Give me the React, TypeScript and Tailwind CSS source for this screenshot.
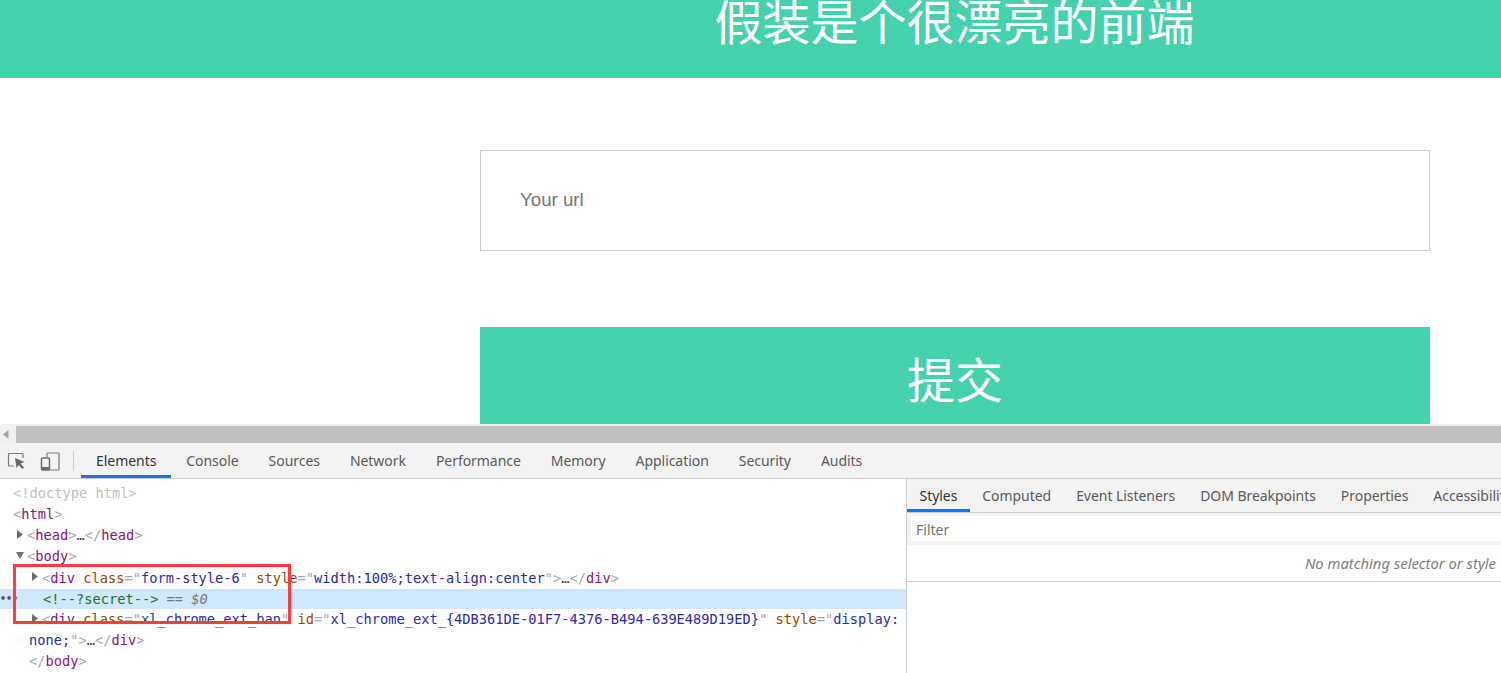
import React from "react";

const uiFont = "font-['Noto_Sans',sans-serif]";

const mainTabs = ["Elements", "Console", "Sources", "Network", "Performance", "Memory", "Application", "Security", "Audits"];
const sideTabs = ["Styles", "Computed", "Event Listeners", "DOM Breakpoints", "Properties", "Accessibility"];

const Arrow: React.FC<{ open?: boolean }> = ({ open }) => (
  <svg width="8" height="10" viewBox="0 0 8 10" className="shrink-0 mr-[3px] mb-[2px]">
    {open ? <path d="M0 1h8L4 8z" fill="#6e6e6e" /> : <path d="M1 0l6 4.5L1 9z" fill="#6e6e6e" />}
  </svg>
);

const Tag: React.FC<{ children: React.ReactNode }> = ({ children }) => <span className="text-[#881280]">{children}</span>;
const B: React.FC<{ children: React.ReactNode }> = ({ children }) => <span className="text-[#a8a8a8]">{children}</span>;
const Name: React.FC<{ children: React.ReactNode }> = ({ children }) => <span className="text-[#994500]">{children}</span>;
const Val: React.FC<{ children: React.ReactNode }> = ({ children }) => <span className="text-[#2a2aae]">{children}</span>;

const Row: React.FC<{ className?: string; arrow?: boolean; open?: boolean; children: React.ReactNode }> = ({ className, arrow, open, children }) => (
  <div className={`flex items-center whitespace-pre ${className ?? ""}`}>
    {arrow && <Arrow open={open} />}
    <span>{children}</span>
  </div>
);

const App: React.FC = () => {
  return (
    <div className="w-[1501px] h-[673px] overflow-hidden bg-white flex flex-col">
      {/* page */}
      <div className="h-[424px] shrink-0 overflow-hidden font-['Liberation_Sans','Noto_Sans_CJK_SC',sans-serif]">
        <div className="h-[78px] bg-[#45d1ae] flex items-end justify-center pl-[408px] pb-[24px] overflow-hidden">
          <h1 className="text-[48px] leading-[60px] font-normal text-white whitespace-nowrap">假装是个很漂亮的前端</h1>
        </div>
        <div className="ml-[480px] w-[950px] pt-[72px]">
          <input
            placeholder="Your url"
            className="block w-full h-[101px] border border-[#cccccc] px-[39px] pb-[2px] text-[18.700px] outline-none placeholder:text-[#757575]"
          />
          <button className="block mt-[76px] w-full h-[106px] pt-[4px] bg-[#45d1ae] text-white text-[48px] leading-[100px] font-normal">提交</button>
        </div>
      </div>

      {/* horizontal scrollbar */}
      <div className="h-[19px] shrink-0 bg-[#f1f1f1] pt-[2px] flex">
        <div className="w-[16px] h-[17px] flex items-center pl-[3px]">
          <svg width="6" height="9" viewBox="0 0 6 9"><path d="M5.500 0v9L0 4.500z" fill="#a3a3a3" /></svg>
        </div>
        <div className="flex-1 h-[17px] bg-[#c0c0c0]" />
      </div>

      {/* devtools toolbar */}
      <div className={`h-[36px] shrink-0 bg-[#f3f3f3] border-b border-[#cccccc] flex items-stretch ${uiFont}`}>
        <div className="w-[74px] flex items-center shrink-0 relative">
          <svg width="20" height="20" viewBox="0 0 20 20" className="ml-[7px]">
            <path d="M7 15H2.500A1 1 0 0 1 1.500 14V3.500A1 1 0 0 1 2.500 2.500H15A1 1 0 0 1 16 3.500V7" fill="none" stroke="#7a7a7a" strokeWidth="1.200" />
            <path d="M8 7l9.500 4-4 1.500 3.500 4-1.800 1.500-3.300-4-2.400 3z" fill="#666666" />
          </svg>
          <svg width="20" height="20" viewBox="0 0 20 20" className="ml-[13px]">
            <path d="M7 6V2.500A.5.5 0 0 1 7.500 2H18.500A.5.5 0 0 1 19 2.500V18.500A.5.5 0 0 1 18.500 19H9" fill="none" stroke="#7a7a7a" strokeWidth="1.200" />
            <rect x="1.500" y="7" width="8" height="12" rx="1" fill="none" stroke="#6e6e6e" strokeWidth="1.500" />
            <rect x="1.500" y="16" width="8" height="3" fill="#6e6e6e" />
          </svg>
          <div className="absolute right-0 top-[8px] w-px h-[20px] bg-[#cccccc]" />
        </div>
        <div className="flex pl-[7px]">
          {mainTabs.map((t, i) => (
            <div
              key={t}
              className={`px-[15px] flex items-center text-[14px] tracking-[-0.05px] h-[35px] ${i === 0 ? "text-[#333333] border-b-[3px] border-[#1a73e8] pt-[3px]" : "text-[#5a5a5a]"}`}
            >
              {t}
            </div>
          ))}
        </div>
      </div>

      {/* devtools body */}
      <div className="flex-1 flex min-h-0">
        <div className="w-[907px] shrink-0 border-r border-[#cccccc] pt-[4px] relative overflow-hidden font-['DejaVu_Sans_Mono',monospace] text-[13.700px]">
          <Row className="h-[21px] pl-[13px] text-[#c0c0c0]">{"<!doctype html>"}</Row>
          <Row className="h-[21px] pl-[13px]"><B>{"<"}</B><Tag>html</Tag><B>{">"}</B></Row>
          <Row className="h-[21px] pl-[16px]" arrow><B>{"<"}</B><Tag>head</Tag><B>{">"}</B><span className="text-[#444444]">…</span><B>{"</"}</B><Tag>head</Tag><B>{">"}</B></Row>
          <Row className="h-[21px] pl-[16px]" arrow open><B>{"<"}</B><Tag>body</Tag><B>{">"}</B></Row>
          <Row className="h-[22px] pl-[31px]" arrow>
            <B>{"<"}</B><Tag>div</Tag> <Name>class</Name><B>=</B><B>"</B><Val>form-style-6</Val><B>"</B> <Name>style</Name><B>=</B><B>"</B><Val>width:100%;text-align:center</Val><B>"</B><B>{">"}</B><span className="text-[#444444]">…</span><B>{"</"}</B><Tag>div</Tag><B>{">"}</B>
          </Row>
          <Row className="h-[20px] pl-[43px] bg-[#cfe8fc]">
            <span className="text-[#236e25]">{"<!--?secret-->"}</span><span className="text-[#777777]"> == </span><span className="italic text-[#777777]">$0</span>
          </Row>
          <Row className="h-[21px] pl-[31px]" arrow>
            <B>{"<"}</B><Tag>div</Tag> <Name>class</Name><B>=</B><B>"</B><Val>xl_chrome_ext_ban</Val><B>"</B> <Name>id</Name><B>=</B><B>"</B><Val>{"xl_chrome_ext_{4DB361DE-01F7-4376-B494-639E489D19ED}"}</Val><B>"</B> <Name>style</Name><B>=</B><B>"</B><Val>display:</Val>
          </Row>
          <Row className="h-[21px] pl-[29px]"><Val>none;</Val><B>"</B><B>{">"}</B><span className="text-[#444444]">…</span><B>{"</"}</B><Tag>div</Tag><B>{">"}</B></Row>
          <Row className="h-[21px] pl-[29px]"><B>{"</"}</B><Tag>body</Tag><B>{">"}</B></Row>
          {/* selected row dots */}
          <div className="absolute left-0 top-[115px] text-[#555555] text-[10px] leading-[10px] font-bold">•••</div>
          {/* red annotation box */}
          <div className="absolute left-[13px] top-[85px] w-[278px] h-[60px] border-[3px] border-[#ff3b3b]" />
        </div>

        <div className={`flex-1 min-w-0 overflow-hidden ${uiFont}`}>
          <div className="h-[34px] bg-[#f3f3f3] border-b border-[#cccccc] flex whitespace-nowrap">
            {sideTabs.map((t, i) => (
              <div
                key={t}
                className={`px-[12.500px] flex items-center text-[14px] tracking-[-0.05px] h-[33px] shrink-0 ${i === 0 ? "text-[#333333] border-b-[3px] border-[#1a73e8] pt-[3px]" : "text-[#5a5a5a]"}`}
              >
                {t}
              </div>
            ))}
          </div>
          <div className="h-[32px] bg-[#f3f3f3] pl-[4px] pt-[3px]">
            <div className="h-[25px] bg-white pl-[5px] pt-px flex items-center text-[14px] text-[#757575]">Filter</div>
          </div>
          <div className="h-[37px] border-b border-[#cccccc] flex items-center justify-end pr-[5px] text-[14.800px] italic text-[#808080]">
            No matching selector or style
          </div>
        </div>
      </div>
    </div>
  );
};

export default App;
